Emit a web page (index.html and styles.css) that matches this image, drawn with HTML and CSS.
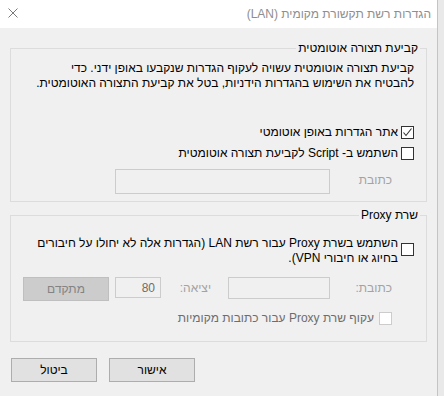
FILE: index.html
```html
<!DOCTYPE html>
<html lang="he" dir="rtl">
<head>
    <meta charset="UTF-8">
    <title>הגדרות רשת תקשורת מקומית (LAN)</title>
    <link rel="stylesheet" href="styles.css">
</head>
<body>
    <div class="window">
        <!-- שורת כותרת -->
        <div class="titlebar">
            <span class="title">הגדרות רשת תקשורת מקומית (LAN)</span>
            <svg class="close" width="10" height="10" viewBox="0 0 10 10">
                <path d="M0.5 0.5 L9.5 9.5 M9.5 0.5 L0.5 9.5" stroke="#7a7a7a" stroke-width="1" fill="none"/>
            </svg>
        </div>

        <!-- קביעת תצורה אוטומטית -->
        <fieldset class="group group-auto">
            <legend>קביעת תצורה אוטומטית</legend>
            <p class="desc">קביעת תצורה אוטומטית עשויה לעקוף הגדרות שנקבעו באופן ידני. כדי<br>להבטיח את השימוש בהגדרות הידניות, בטל את קביעת התצורה האוטומטית.</p>

            <div class="check-row row-detect">
                <span class="box">
                    <svg width="11" height="11" viewBox="0 0 11 11">
                        <path d="M1.5 5.5 L4 8.5 L9.5 1.5" stroke="#333" stroke-width="1.1" fill="none"/>
                    </svg>
                </span>
                <span>אתר הגדרות באופן אוטומטי</span>
            </div>
            <div class="check-row row-script">
                <span class="box"></span>
                <span>השתמש ב- Script לקביעת תצורה אוטומטית</span>
            </div>
            <div class="field-row row-script-addr">
                <span class="label">כתובת</span>
                <input class="text-input addr-long" type="text" readonly>
            </div>
        </fieldset>

        <!-- שרת Proxy -->
        <fieldset class="group group-proxy">
            <legend>שרת Proxy</legend>
            <div class="check-row proxy-use">
                <span class="box"></span>
                <span class="proxy-text">השתמש בשרת Proxy עבור רשת LAN (הגדרות אלה לא יחולו על חיבורים<br>בחיוג או חיבורי VPN).</span>
            </div>
            <div class="field-row row-proxy">
                <span class="label">כתובת:</span>
                <input class="text-input addr-short" type="text" readonly>
                <span class="label label-port">יציאה:</span>
                <input class="text-input port" type="text" value="80" readonly>
                <button class="btn btn-disabled">מתקדם</button>
            </div>
            <div class="check-row row-bypass">
                <span class="box box-disabled"></span>
                <span>עקוף שרת Proxy עבור כתובות מקומיות</span>
            </div>
        </fieldset>

        <!-- כפתורים -->
        <div class="actions">
            <button class="btn">אישור</button>
            <button class="btn">ביטול</button>
        </div>
    </div>
</body>
</html>
```

FILE: styles.css
```css
html, body {
    margin: 0;
    height: 100%;
}

body {
    background: #e9e9e9;
    font-family: "Liberation Sans", "DejaVu Sans", sans-serif;
    font-size: 12px;
    line-height: 15px;
    color: #000;
}

.window {
    width: 438px;
    height: 396px;
    margin-left: 0;
    margin-right: auto;
    background: #f0f0f0;
    border-right: 1px solid #c4c4c4;
    box-sizing: border-box;
    direction: rtl;
}

/* שורת כותרת */
.titlebar {
    height: 28px;
    background: #fff;
    display: flex;
    justify-content: space-between;
    align-items: flex-start;
    padding: 0 6px 0 8px;
}

.title {
    color: #8e8e8e;
    margin-top: 7px;
}

.close {
    margin-top: 8px;
}

/* קבוצות */
.group {
    margin: 0 10px 0 10px;
    padding: 5px 12px 7px 12px;
    border: 1px solid #dcdcdc;
    min-width: 0;
}

.group legend {
    padding: 0 2px;
    margin-right: -6px;
    line-height: 15px;
}

.group-auto {
    margin-top: 13px;
}

.group-proxy {
    margin-top: 6px;
    padding-top: 13px;
    padding-bottom: 15px;
}

.desc {
    margin: 0;
}

/* תיבות סימון */
.check-row {
    display: flex;
    align-items: center;
    gap: 3px;
    height: 17px;
}

.row-detect {
    margin-top: 33px;
}

.row-script {
    margin-top: 4px;
}

.box {
    width: 13px;
    height: 13px;
    box-sizing: border-box;
    border: 1px solid #333;
    background: #fff;
    flex: none;
    display: flex;
    align-items: center;
    justify-content: center;
}

.box-disabled {
    border-color: #cccccc;
}

.proxy-use {
    height: auto;
    align-items: flex-start;
}

.proxy-use .box {
    margin-top: 7px;
}

.row-bypass {
    margin-top: 10px;
    height: 15px;
    padding-right: 22px;
    gap: 5px;
    color: #6d6d6d;
}

/* שדות טקסט */
.field-row {
    display: flex;
    align-items: flex-start;
    padding-right: 22px;
}

.row-script-addr {
    margin-top: 7px;
}

.row-proxy {
    margin-top: 11px;
}

.label {
    width: 62px;
    flex: none;
    color: #a3a3a3;
    margin-top: 4px;
}

.label-port {
    width: 67px;
    padding-right: 17px;
    box-sizing: border-box;
}

.text-input {
    box-sizing: border-box;
    border: 1px solid #cccccc;
    background: #f0f0f0;
    margin: 0;
    padding: 0 5px;
    font: inherit;
    color: #6d6d6d;
    outline: none;
}

.addr-long {
    width: 215px;
    height: 25px;
}

.addr-short {
    width: 102px;
    height: 22px;
}

.port {
    width: 46px;
    height: 21px;
    text-align: right;
}

/* כפתורים */
.btn {
    width: 86px;
    height: 24px;
    box-sizing: border-box;
    margin: 0;
    padding: 0;
    border: 1px solid #adadad;
    background: #e1e1e1;
    font: inherit;
    color: #000;
}

.btn-disabled {
    margin-right: 6px;
    background: #cccccc;
    border-color: #bfbfbf;
    color: #838383;
}

.actions {
    display: flex;
    justify-content: flex-end;
    gap: 12px;
    margin-top: 16px;
    padding-left: 11px;
}
```
